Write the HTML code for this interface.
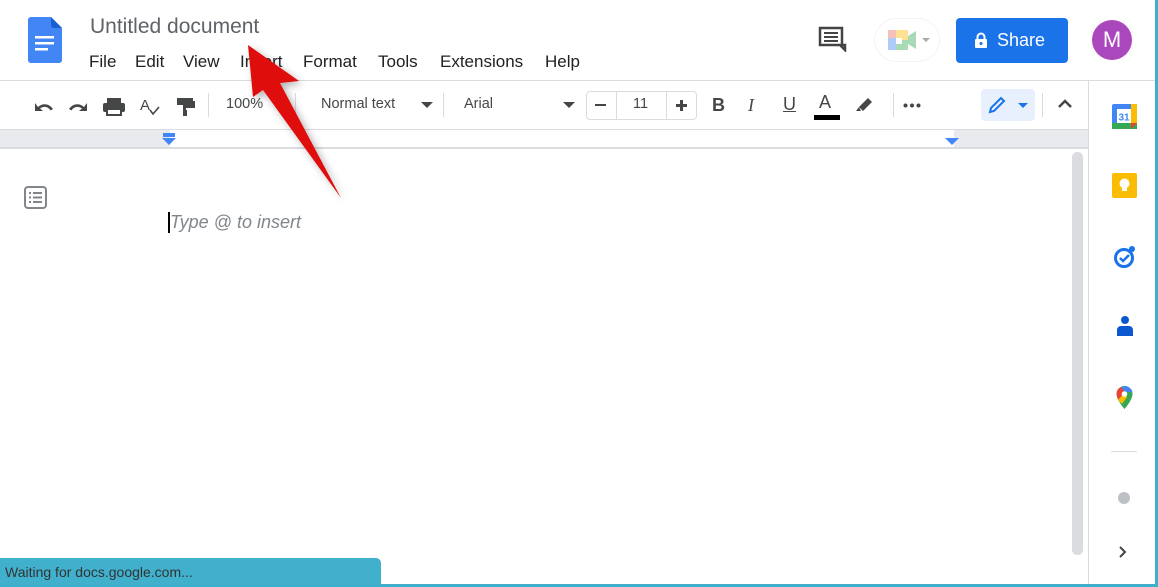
<!DOCTYPE html>
<html><head><style>
*{margin:0;padding:0;box-sizing:border-box}
body{width:1158px;height:587px;overflow:hidden;background:#fff;font-family:"Liberation Sans",Arial,sans-serif;position:relative}
.a{position:absolute}
.menu span{position:absolute;top:52px;font-size:17px;color:#202124}
.tb{color:#444746;font-size:14.5px}
</style></head><body>
<svg class="a" style="left:28px;top:17px" width="34" height="46" viewBox="0 0 34 46"><path d="M3 0h20l11 11v32a3 3 0 0 1-3 3H3a3 3 0 0 1-3-3V3a3 3 0 0 1 3-3z" fill="#4285f4"/><path d="M23 0l11 11H26a3 3 0 0 1-3-3z" fill="#1a5fd0"/><rect x="7" y="19" width="19" height="2.5" fill="#fff"/><rect x="7" y="25" width="19" height="2.5" fill="#fff"/><rect x="7" y="31" width="13" height="2.5" fill="#fff"/></svg>
<div class="a" style="left:90px;top:15px;font-size:21px;color:#5f6368">Untitled document</div>
<div class="menu"><span style="left:89px">File</span><span style="left:135px">Edit</span><span style="left:183px">View</span><span style="left:240px">Insert</span><span style="left:303px">Format</span><span style="left:378px">Tools</span><span style="left:440px">Extensions</span><span style="left:545px">Help</span></div>
<svg class="a" style="left:817px;top:26px" width="30" height="26" viewBox="0 0 30 26"><path d="M3 2h22v17h3v5l-5-5H3z" fill="none" stroke="#444" stroke-width="2.5"/><path d="M7 7h14M7 11h14M7 15h14" stroke="#444" stroke-width="2"/></svg>
<div class="a" style="left:874px;top:18px;width:66px;height:44px;border-radius:22px;border:1px solid #f1f3f4"></div>
<svg class="a" style="left:886px;top:28px" width="48" height="24"><rect x="2" y="2" width="10" height="10" fill="#f6c1b9"/><rect x="10" y="2" width="12" height="10" fill="#fde293"/><rect x="2" y="10" width="8" height="12" fill="#aecbfa"/><rect x="10" y="12" width="12" height="10" fill="#a8dab5"/><rect x="10" y="10" width="6" height="6" fill="#fff"/><path d="M22 8l8-5v18l-8-5z" fill="#a8dab5"/><path d="M36 10l4 4 4-4z" fill="#aaa"/></svg>
<div class="a" style="left:956px;top:18px;width:112px;height:45px;background:#1a73e8;border-radius:4px;color:#fff;font-size:18px;line-height:45px"><svg class="a" style="left:18px;top:14px" width="14" height="17"><path d="M3.5 7V5a3.5 3.5 0 0 1 7 0v2" fill="none" stroke="#fff" stroke-width="2"/><rect x="1" y="7" width="12" height="9" rx="1" fill="#fff"/><circle cx="7" cy="11.5" r="1.5" fill="#1a73e8"/></svg><span style="position:absolute;left:41px">Share</span></div>
<div class="a" style="left:1092px;top:20px;width:40px;height:40px;border-radius:50%;background:#ab47bc;color:#fff;font-size:22px;text-align:center;line-height:40px">M</div>
<div class="a" style="left:0;top:80px;width:1158px;height:1px;background:#dadce0"></div>
<div class="a tb" style="left:0;top:81px;width:1088px;height:48px">
<svg class="a" style="left:33px;top:14px" width="170" height="22" viewBox="0 0 170 22" fill="#444746"><path d="M5 12c4-4 11-4 15 2l-2.5 1.5C15 11 10 11 7 13.5L10 16H2V8z"/><path d="M51 12c-4-4-11-4-15 2l2.5 1.5C41 11 46 11 49 13.5L46 16h8V8z"/><rect x="70" y="8" width="22" height="9" rx="2"/><rect x="74" y="3" width="14" height="5"/><rect x="74" y="14" width="14" height="6" fill="#fff" stroke="#444746" stroke-width="2"/><text x="107" y="15" font-size="15" font-family="Liberation Sans">A</text><path d="M117 15l3 4 6-7" fill="none" stroke="#444746" stroke-width="1.6"/><rect x="144" y="3" width="16" height="7"/><path d="M160 6h2v7h-9v3h-3v-6h9V6" fill="#444746"/><rect x="150" y="15" width="4" height="6"/></svg>
<div class="a" style="left:208px;top:12px;width:1px;height:24px;background:#dadce0"></div>
<span class="a" style="left:226px;top:15px">100%</span>
<div class="a" style="left:295px;top:12px;width:1px;height:24px;background:#dadce0"></div>
<span class="a" style="left:321px;top:15px">Normal text</span>
<svg class="a" style="left:421px;top:21px" width="12" height="6"><path d="M0 0h12L6 6z" fill="#444746"/></svg>
<div class="a" style="left:443px;top:12px;width:1px;height:24px;background:#dadce0"></div>
<span class="a" style="left:464px;top:15px">Arial</span>
<svg class="a" style="left:563px;top:21px" width="12" height="6"><path d="M0 0h12L6 6z" fill="#444746"/></svg>
<div class="a" style="left:586px;top:10px;width:111px;height:29px;border:1px solid #dadce0;border-radius:4px"></div>
<div class="a" style="left:616px;top:10px;width:1px;height:29px;background:#dadce0"></div>
<div class="a" style="left:666px;top:10px;width:1px;height:29px;background:#dadce0"></div>
<div class="a" style="left:595px;top:23px;width:11px;height:2px;background:#444746"></div>
<span class="a" style="left:633px;top:15px">11</span>
<div class="a" style="left:676px;top:23px;width:11px;height:2.5px;background:#444746"></div>
<div class="a" style="left:680.3px;top:18.5px;width:2.5px;height:11px;background:#444746"></div>
<span class="a" style="left:712px;top:14px;font-size:18px;font-weight:bold">B</span>
<span class="a" style="left:748px;top:14px;font-size:18px;font-style:italic;font-family:'Liberation Serif'">I</span>
<span class="a" style="left:783px;top:13px;font-size:18px;text-decoration:underline">U</span>
<span class="a" style="left:819px;top:11px;font-size:18px">A</span>
<div class="a" style="left:814px;top:34px;width:26px;height:5px;background:#000"></div>
<svg class="a" style="left:855px;top:14px" width="20" height="18"><path d="M4 12l9-9 4 4-9 9z" fill="#444746"/><path d="M4 12l-3 4h5z" fill="#444746"/></svg>
<div class="a" style="left:893px;top:12px;width:1px;height:24px;background:#dadce0"></div>
<svg class="a" style="left:903px;top:22px" width="18" height="5"><circle cx="2.5" cy="2.5" r="2" fill="#444746"/><circle cx="9" cy="2.5" r="2" fill="#444746"/><circle cx="15.5" cy="2.5" r="2" fill="#444746"/></svg>
<div class="a" style="left:981px;top:8px;width:54px;height:32px;background:#e8f0fe;border-radius:4px"></div>
<svg class="a" style="left:988px;top:15px" width="40" height="18"><path d="M2 16l1-4 10-10 3 3-10 10z" fill="none" stroke="#1a73e8" stroke-width="2"/><path d="M30 7h10l-5 5z" fill="#1a73e8"/></svg>
<div class="a" style="left:1042px;top:12px;width:1px;height:24px;background:#dadce0"></div>
<svg class="a" style="left:1057px;top:18px" width="16" height="10"><path d="M2 8l6-6 6 6" fill="none" stroke="#444746" stroke-width="2.5"/></svg>
</div>
<div class="a" style="left:0;top:129px;width:1088px;height:1px;background:#dadce0"></div>
<div class="a" style="left:0;top:130px;width:1088px;height:17px;background:#e8eaed"></div>
<div class="a" style="left:170px;top:130px;width:784px;height:17px;background:#fff"></div>
<div class="a" style="left:0;top:147px;width:1088px;height:2px;background:#dadce0"></div>
<svg class="a" style="left:162px;top:133px" width="14" height="13"><rect x="1" y="0" width="12" height="4" fill="#4285f4"/><path d="M0 5h14l-7 7z" fill="#4285f4"/></svg>
<svg class="a" style="left:945px;top:138px" width="14" height="8"><path d="M0 0h14l-7 7z" fill="#4285f4"/></svg>
<svg class="a" style="left:24px;top:186px" width="24" height="24"><rect x="1" y="1" width="21" height="21" rx="3" fill="none" stroke="#80868b" stroke-width="2"/><path d="M5 7h2M9 7h9M5 11.5h2M9 11.5h9M5 16h2M9 16h9" stroke="#80868b" stroke-width="2"/></svg>
<div class="a" style="left:168px;top:212px;width:2px;height:21px;background:#000"></div>
<div class="a" style="left:170px;top:212px;font-size:18px;font-style:italic;color:#80868b">Type @ to insert</div>
<div class="a" style="left:1072px;top:152px;width:11px;height:403px;background:#dadce0;border-radius:5px"></div>
<div class="a" style="left:1088px;top:81px;width:1px;height:506px;background:#dadce0"></div>
<svg class="a" style="left:1112px;top:104px" width="25" height="25"><rect x="0" y="0" width="25" height="25" rx="2" fill="#4285f4"/><rect x="0" y="19" width="25" height="6" fill="#34a853"/><rect x="19" y="0" width="6" height="19" fill="#fbbc04"/><path d="M19 19h6l-6 6z" fill="#ea4335"/><rect x="5" y="5" width="14" height="14" fill="#fff"/><text x="6.5" y="16.5" font-size="10" font-weight="bold" fill="#4285f4" font-family="Liberation Sans">31</text></svg>
<svg class="a" style="left:1112px;top:173px" width="25" height="25"><rect width="25" height="25" rx="2" fill="#fbbc04"/><circle cx="12.5" cy="10.5" r="5" fill="#fff"/><rect x="10" y="15" width="5" height="3" fill="#fff"/></svg>
<svg class="a" style="left:1113px;top:245px" width="24" height="24"><circle cx="11" cy="13" r="8.5" fill="none" stroke="#1a73e8" stroke-width="3"/><path d="M7 13l3 3 6-6" fill="none" stroke="#1a73e8" stroke-width="2.5"/><circle cx="19" cy="4" r="3" fill="#1a73e8"/></svg>
<svg class="a" style="left:1115px;top:314px" width="20" height="24"><circle cx="10" cy="6" r="4" fill="#0b57d0"/><path d="M2 22v-6a4 4 0 0 1 4-4h8a4 4 0 0 1 4 4v6z" fill="#0b57d0"/></svg>
<svg class="a" style="left:1116px;top:386px" width="17" height="23" viewBox="0 0 17 23"><path d="M8.5 0A8 8 0 0 1 16.5 8c0 6-8 15-8 15S0.5 14 0.5 8A8 8 0 0 1 8.5 0z" fill="#34a853"/><path d="M0.5 8A8 8 0 0 1 5 1l4 5-7 8z" fill="#ea4335"/><path d="M5 1a8 8 0 0 1 11.5 5L9 6z" fill="#4285f4"/><path d="M2 14l7-8 2 5-5 7z" fill="#fbbc04"/><circle cx="8.5" cy="8" r="2.8" fill="#fff"/></svg>
<div class="a" style="left:1111px;top:451px;width:26px;height:1px;background:#dadce0"></div>
<div class="a" style="left:1118px;top:492px;width:12px;height:12px;border-radius:50%;background:#bdc1c6"></div>
<svg class="a" style="left:1118px;top:545px" width="10" height="14"><path d="M2 2l5 5-5 5" fill="none" stroke="#444" stroke-width="2"/></svg>
<div class="a" style="left:1155px;top:0;width:3px;height:587px;background:#3fb0cc"></div>
<div class="a" style="left:0;top:584px;width:1158px;height:3px;background:#3fb0cc"></div>
<div class="a" style="left:0;top:558px;width:381px;height:27px;background:#40b0cc;border-radius:0 5px 0 0;color:#333;font-size:14px;line-height:28px;padding-left:5px">Waiting for docs.google.com...</div>
<svg class="a" style="left:0;top:0" width="1158" height="587"><defs><filter id="s" x="-50%" y="-50%" width="200%" height="200%"><feDropShadow dx="3" dy="3" stdDeviation="4" flood-opacity="0.3"/></filter></defs><path d="M248 45L299 81 280 83 341 198 263 90 253 97z" fill="#e00d0d" filter="url(#s)"/></svg>
</body></html>
